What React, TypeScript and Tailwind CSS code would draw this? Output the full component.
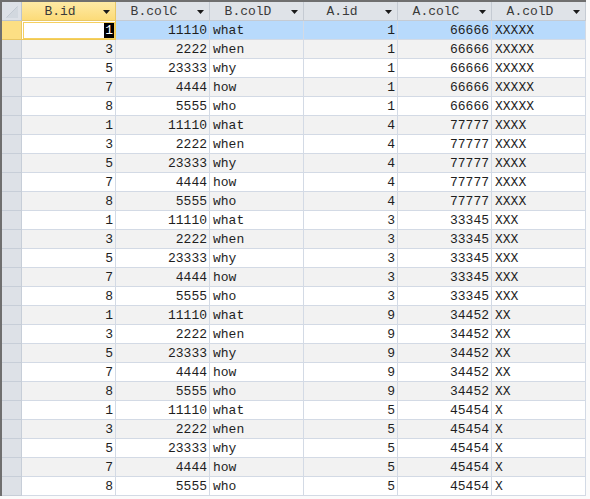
import React from 'react';

type Row = { bid: string; bcolC: string; bcolD: string; aid: string; acolC: string; acolD: string };

const bRows = [
  ['1', '11110', 'what'],
  ['3', '2222', 'when'],
  ['5', '23333', 'why'],
  ['7', '4444', 'how'],
  ['8', '5555', 'who'],
];

const aRows = [
  ['1', '66666', 'XXXXX'],
  ['4', '77777', 'XXXX'],
  ['3', '33345', 'XXX'],
  ['9', '34452', 'XX'],
  ['5', '45454', 'X'],
];

const rows: Row[] = aRows.flatMap(([aid, acolC, acolD]) =>
  bRows.map(([bid, bcolC, bcolD]) => ({ bid, bcolC, bcolD, aid, acolC, acolD }))
);

const headers = ['B.id', 'B.colC', 'B.colD', 'A.id', 'A.colC', 'A.colD'];

const Arrow = () => (
  <svg width="7" height="4" viewBox="0 0 7 4" className="shrink-0">
    <path d="M0 0 H7 L3.5 4 Z" fill="#1a1a1a" />
  </svg>
);

const App: React.FC = () => {
  return (
    <div
      className="w-[590px] h-[499px] overflow-hidden bg-[#fbfbfb] text-[13px] text-[#1e1e1e]"
      style={{ fontFamily: '"Liberation Mono", "DejaVu Sans Mono", monospace' }}
    >
      <div className="inline-flex flex-col border-l-2 border-t-2 border-[#6f6f6f] bg-white">
        {/* header */}
        <div className="flex h-[19px]">
          <div className="w-[20px] h-full bg-[#dde1e7] border-r border-b border-[#bcc4ce] flex items-end justify-end pr-[3px] pb-[2px]">
            <svg width="12" height="12" viewBox="0 0 12 12">
              <path d="M0 12 L12 0 L12 12 Z" fill="#d2d8df" />
              <path d="M0.5 11.5 L11.5 0.5" stroke="#c2c9d2" strokeWidth="1" />
            </svg>
          </div>
          {headers.map((h, i) => (
            <div
              key={h}
              className={
                i === 0
                  ? 'w-[94px] h-full flex items-center pt-[1px] border-r border-b border-[#e8c766] bg-gradient-to-b from-[#feeaa5] to-[#fcdb78] text-[#3a3a3a]'
                  : 'w-[94px] h-full flex items-center pt-[1px] border-r border-b border-[#c5cbd3] bg-[#dfe3e8] text-[#3a3a3a]'
              }
            >
              <span className="flex-1 text-center leading-none">{h}</span>
              <span className="w-[17px] flex justify-center">
                <Arrow />
              </span>
            </div>
          ))}
        </div>

        {rows.map((r, idx) => {
          const selected = idx === 0;
          const bg = selected ? 'bg-[#b8dafc]' : idx % 2 === 1 ? 'bg-[#f2f2f2]' : 'bg-white';
          const cell = `w-[94px] h-full border-r border-b border-[#d3dae5] flex items-center pt-[1px] leading-none ${bg}`;
          return (
            <div key={idx} className="flex h-[19px]">
              <div
                className={
                  selected
                    ? 'w-[20px] h-full bg-[#fcdf84] border-r border-b border-[#e8c766]'
                    : 'w-[20px] h-full bg-[#dde1e7] border-r border-b border-[#c7ced8]'
                }
              />
              {selected ? (
                <div className="w-[94px] h-full border-r border-b border-[#f0c850] bg-white flex items-center justify-end pr-[1px] leading-none outline outline-1 outline-[#f5d060] -outline-offset-2">
                  <span className="bg-black text-white px-[1px] py-[2px]">{r.bid}</span>
                </div>
              ) : (
                <div className={`${cell} justify-end pr-[2px]`}>{r.bid}</div>
              )}
              <div className={`${cell} justify-end pr-[2px]`}>{r.bcolC}</div>
              <div className={`${cell} pl-[3px]`}>{r.bcolD}</div>
              <div className={`${cell} justify-end pr-[2px]`}>{r.aid}</div>
              <div className={`${cell} justify-end pr-[2px]`}>{r.acolC}</div>
              <div className={`${cell} pl-[3px]`}>{r.acolD}</div>
            </div>
          );
        })}
      </div>
    </div>
  );
};

export default App;
